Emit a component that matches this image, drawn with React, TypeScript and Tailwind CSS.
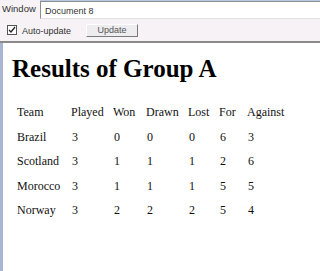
import React from "react";

const headers = ["Team", "Played", "Won", "Drawn", "Lost", "For", "Against"];
const rows = [
  ["Brazil", "3", "0", "0", "0", "6", "3"],
  ["Scotland", "3", "1", "1", "1", "2", "6"],
  ["Morocco", "3", "1", "1", "1", "5", "5"],
  ["Norway", "3", "2", "2", "2", "5", "4"],
];

export default function App() {
  return (
    <div
      className="w-[320px] h-[271px] overflow-hidden flex flex-col bg-[#f6f2f5] text-[#222]"
      style={{ fontFamily: '"Liberation Sans", Arial, sans-serif' }}
    >
      {/* row 1 */}
      <div className="h-[19px] flex shrink-0">
        <div className="w-[40px] pl-[2px] pt-[3px] text-[9.5px] leading-[11px] text-[#333]">Window</div>
        <div className="flex-1 flex flex-col">
          <div className="h-[1px] bg-[#b8c9e4]" />
          <div className="flex-1 bg-white border-t border-l border-[#8e8e8e] border-b border-b-[#e2e2e2] pl-[4px] pt-[4px] text-[9px] leading-[10px] text-[#333]">
            Document 8
          </div>
        </div>
      </div>
      {/* row 2 */}
      <div className="h-[22px] flex items-center shrink-0">
        <div className="ml-[7px] w-[10px] h-[10px] border border-[#555] bg-white flex items-center justify-center">
          <svg width="8" height="8" viewBox="0 0 8 8">
            <path d="M1 4 L3 6 L7 1" fill="none" stroke="#222" strokeWidth="1.3" />
          </svg>
        </div>
        <div className="ml-[5px] text-[9px] leading-[10px] text-[#333] pt-[1px]">Auto-update</div>
        <div className="ml-[15px] w-[52px] h-[13px] border border-t-white border-l-white border-b-[#7a7a7a] border-r-[#7a7a7a] bg-[#efecef] flex items-center justify-center text-[9px] leading-[10px] text-[#555]">
          Update
        </div>
      </div>
      {/* separator */}
      <div className="h-[2px] bg-[#8a8a8a] shrink-0" />
      {/* content */}
      <div className="flex-1 bg-white border-l-[3px] border-[#a9b5d1] pt-[13px]" style={{ fontFamily: '"Liberation Serif", "Times New Roman", serif' }}>
        <h1 className="pl-[9px] text-[25px] leading-[25px] font-bold text-black">Results of Group A</h1>
        <div className="mt-[19px] ml-[14px] grid grid-cols-[54px_42px_33px_42px_31px_28px_auto] auto-rows-[24.5px] text-[12px] leading-[24px] text-[#111]">
          {headers.map((h) => (
            <div key={h}>{h}</div>
          ))}
          {rows.map((r) =>
            r.map((c, i) => (
              <div key={r[0] + i} className={i === 0 ? "" : "pl-[1px]"}>
                {c}
              </div>
            ))
          )}
        </div>
      </div>
    </div>
  );
}
